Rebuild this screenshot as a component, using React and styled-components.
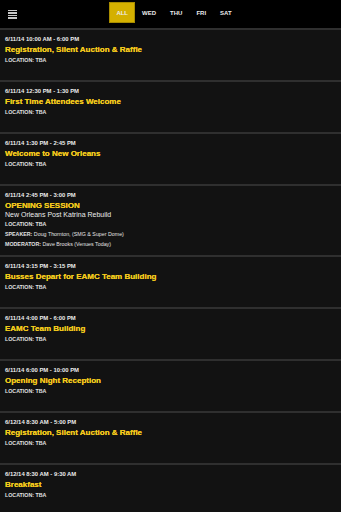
import React from 'react';
import styled, { createGlobalStyle } from 'styled-components';

const GlobalStyle = createGlobalStyle`
  html, body {
    margin: 0;
    padding: 0;
    background: #121212;
  }
  body {
    font-family: "Liberation Sans", Arial, Helvetica, sans-serif;
    -webkit-font-smoothing: antialiased;
  }
`;

const Page = styled.div`
  width: 341px;
  height: 512px;
  overflow: hidden;
  background: #121212;
`;

const Header = styled.header`
  height: 28px;
  background: #000;
  display: grid;
  grid-template-columns: 1fr auto 1fr;
  align-items: center;
`;

const MenuButton = styled.div`
  width: 9px;
  height: 9px;
  margin-left: 8px;
  display: flex;
  flex-direction: column;
  justify-content: space-between;

  span {
    display: block;
    height: 1.5px;
    background: #c8c8c8;
  }
`;

const Tabs = styled.nav`
  display: flex;
  align-items: center;
  height: 28px;
  margin-left: 7px;
`;

const Tab = styled.div`
  height: 21px;
  box-sizing: border-box;
  padding: 0 6px;
  display: flex;
  align-items: center;
  font-size: 6px;
  font-weight: 700;
  color: #ededed;
  background: ${(p) => (p.$active ? '#d4b000' : 'transparent')};
  border: 1px solid ${(p) => (p.$active ? '#a88c00' : 'transparent')};
  margin-top: -3px;
`;

const Row = styled.section`
  border-top: 2px solid #2f2f2f;
  box-sizing: border-box;
  min-height: 52px;
  padding: 6px 5px 7px;
`;

const DateLine = styled.div`
  font-size: 5.9px;
  line-height: 7px;
  font-weight: 700;
  color: #ececec;
`;

const Title = styled.div`
  margin-top: 2px;
  font-size: 8px;
  line-height: 10px;
  font-weight: 700;
  color: #f2c81c;
  text-shadow: 0 0 0.4px #f2c81c;
`;

const Subtitle = styled.div`
  font-size: 7px;
  line-height: 8px;
  color: #ececec;
`;

const Info = styled.div`
  margin-top: 2px;
  font-size: 5.3px;
  line-height: 7px;
  color: #e2e2e2;

  & + & {
    margin-top: 3px;
  }

  b {
    font-weight: 700;
  }
`;

const events = [
  { date: '6/11/14 10:00 AM - 6:00 PM', title: 'Registration, Silent Auction & Raffle' },
  { date: '6/11/14 12:30 PM - 1:30 PM', title: 'First Time Attendees Welcome' },
  { date: '6/11/14 1:30 PM - 2:45 PM', title: 'Welcome to New Orleans' },
  {
    date: '6/11/14 2:45 PM - 3:00 PM',
    title: 'OPENING SESSION',
    subtitle: 'New Orleans Post Katrina Rebuild',
    speaker: 'Doug Thornton, (SMG & Super Dome)',
    moderator: 'Dave Brooks (Venues Today)',
  },
  { date: '6/11/14 3:15 PM - 3:15 PM', title: 'Busses Depart for EAMC Team Building' },
  { date: '6/11/14 4:00 PM - 6:00 PM', title: 'EAMC Team Building' },
  { date: '6/11/14 6:00 PM - 10:00 PM', title: 'Opening Night Reception' },
  { date: '6/12/14 8:30 AM - 5:00 PM', title: 'Registration, Silent Auction & Raffle' },
  { date: '6/12/14 8:30 AM - 9:30 AM', title: 'Breakfast' },
];

const days = ['ALL', 'WED', 'THU', 'FRI', 'SAT'];

export default function App() {
  return (
    <Page>
      <GlobalStyle />
      <Header>
        <MenuButton>
          <span />
          <span />
          <span />
          <span />
        </MenuButton>
        <Tabs>
          {days.map((d, i) => (
            <Tab key={d} $active={i === 0}>
              {d}
            </Tab>
          ))}
        </Tabs>
        <div />
      </Header>
      {events.map((ev, idx) => (
        <Row key={idx}>
          <DateLine>{ev.date}</DateLine>
          <Title>{ev.title}</Title>
          {ev.subtitle && <Subtitle>{ev.subtitle}</Subtitle>}
          <Info>
            <b>LOCATION:</b> <b>TBA</b>
          </Info>
          {ev.speaker && (
            <Info>
              <b>SPEAKER:</b> {ev.speaker}
            </Info>
          )}
          {ev.moderator && (
            <Info>
              <b>MODERATOR:</b> {ev.moderator}
            </Info>
          )}
        </Row>
      ))}
    </Page>
  );
}
